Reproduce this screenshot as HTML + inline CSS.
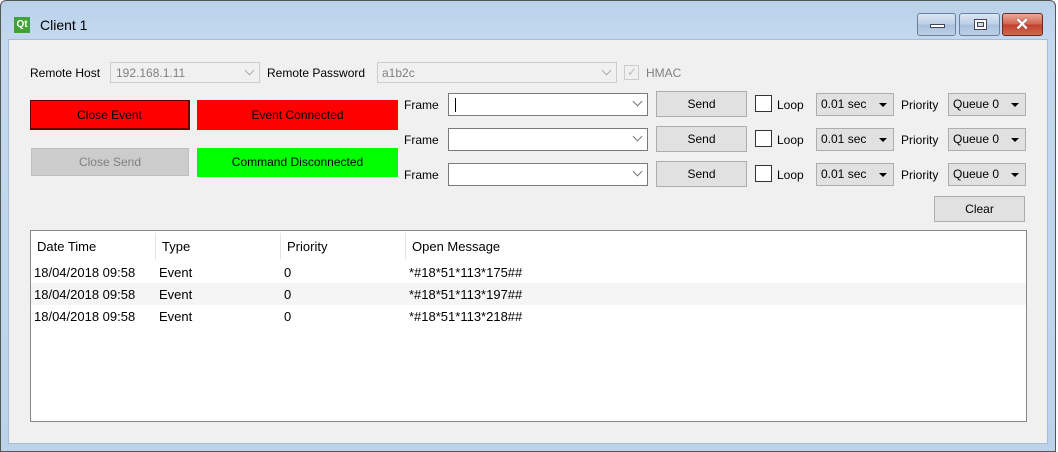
<!DOCTYPE html><html><head><style>
*{box-sizing:border-box;margin:0;padding:0}
body{width:1058px;height:452px;overflow:hidden;font-family:"Liberation Sans",sans-serif;font-size:12px;color:#000;background:#fff;position:relative}
.a{position:absolute}
.win{left:0;top:0;width:1056px;height:452px;background:linear-gradient(#b9d1ea,#c4d9ee 40px,#bcd3ea);border:1px solid #555;border-radius:6px 6px 0 0}
.client{left:8px;top:39px;width:1040px;height:405px;background:#f0f0f0;border:1px solid #a6bdd6}
.t{position:absolute;white-space:nowrap;line-height:14px}
.btn{position:absolute;border:1px solid #adadad;background:#e1e1e1;text-align:center;white-space:nowrap}
.cb{position:absolute;border:1px solid #7a7a7a;background:#fff}
.arr{position:absolute;right:6px;top:50%;width:0;height:0;border-left:4px solid transparent;border-right:4px solid transparent;border-top:4px solid #000;margin-top:-2px}
.chev{position:absolute;right:6px;top:4px;width:7px;height:7px;border-right:1px solid #777;border-bottom:1px solid #777;transform:rotate(45deg)}
.wb{position:absolute;top:13px;height:23px;border:1px solid #6b7f99;border-radius:3px;background:linear-gradient(#d9e6f4,#bccfe6 50%,#a9c0dc 51%,#bcd0e7)}
</style></head><body>
<div class="a win"></div>
<div class="a" style="left:14px;top:17px;width:16px;height:16px;background:#41a13a;color:#fff;font-size:10px;font-weight:bold;line-height:16px;text-align:center">Qt</div>
<div class="t" style="left:40px;top:17px;font-size:14px;line-height:16px">Client 1</div>
<div class="wb" style="left:917px;width:39px"><div class="a" style="left:12px;top:10px;width:15px;height:4px;background:#fff;border:1px solid #445"></div></div>
<div class="wb" style="left:959px;width:41px"><div class="a" style="left:14px;top:5px;width:13px;height:11px;background:#fff;border:1px solid #445"><div class="a" style="left:2px;top:2px;width:7px;height:5px;border:1px solid #445;background:#d0dcea"></div></div></div>
<div class="wb" style="left:1002px;width:41px;border-color:#6b2a22;background:linear-gradient(#e8a898,#d0634e 50%,#c0402a 51%,#d06a50)"><div class="t" style="left:12px;top:2px;color:#fff;font-size:17px;font-weight:bold;line-height:18px;text-shadow:0 0 1px #333">✕</div></div>
<div class="a client"></div>

<div class="t" style="left:30px;top:66px">Remote Host</div>
<div class="cb" style="left:110px;top:62px;width:150px;height:21px;border-color:#ccc;background:#f0f0f0"><div class="t" style="left:5px;top:3px;color:#808080">192.168.1.11</div><div class="chev" style="border-color:#aaa"></div></div>
<div class="t" style="left:267px;top:66px">Remote Password</div>
<div class="cb" style="left:377px;top:62px;width:240px;height:21px;border-color:#ccc;background:#f0f0f0"><div class="t" style="left:4px;top:3px;color:#808080">a1b2c</div><div class="chev" style="border-color:#aaa"></div></div>
<div class="cb" style="left:624px;top:65px;width:15px;height:15px;border-color:#ccc;background:#f0f0f0"><div class="t" style="left:2px;top:-1px;color:#bbb;font-size:12px">✓</div></div>
<div class="t" style="left:646px;top:66px;color:#808080">HMAC</div>

<div class="btn" style="left:30px;top:100px;width:160px;height:30px;background:#f00;border:1px solid #600;border-width:1px 2px 2px 1px;line-height:28px">Close Event</div>
<div class="btn" style="left:197px;top:100px;width:201px;height:30px;background:#f00;border:none;line-height:30px">Event Connected</div>
<div class="btn" style="left:31px;top:148px;width:158px;height:28px;background:#ccc;border-color:#bfbfbf;color:#808080;line-height:26px">Close Send</div>
<div class="btn" style="left:197px;top:148px;width:201px;height:29px;background:#0f0;border:none;line-height:29px">Command Disconnected</div>

<div class="t" style="left:404px;top:98px">Frame</div>
<div class="cb" style="left:448px;top:93px;width:200px;height:23px"><div class="a" style="left:6px;top:4px;width:1px;height:14px;background:#000"></div><div class="chev"></div></div>
<div class="btn" style="left:656px;top:91px;width:91px;height:26px;line-height:24px">Send</div>
<div class="cb" style="left:755px;top:95px;width:17px;height:17px;border-color:#333"></div>
<div class="t" style="left:777px;top:98px">Loop</div>
<div class="btn" style="left:816px;top:93px;width:78px;height:23px;text-align:left;padding-left:4px;line-height:21px">0.01 sec<div class="arr"></div></div>
<div class="t" style="left:901px;top:98px">Priority</div>
<div class="btn" style="left:948px;top:93px;width:78px;height:23px;text-align:left;padding-left:4px;line-height:21px">Queue 0<div class="arr"></div></div>

<div class="t" style="left:404px;top:133px">Frame</div>
<div class="cb" style="left:448px;top:128px;width:200px;height:23px"><div class="chev"></div></div>
<div class="btn" style="left:656px;top:126px;width:91px;height:26px;line-height:24px">Send</div>
<div class="cb" style="left:755px;top:130px;width:17px;height:17px;border-color:#333"></div>
<div class="t" style="left:777px;top:133px">Loop</div>
<div class="btn" style="left:816px;top:128px;width:78px;height:23px;text-align:left;padding-left:4px;line-height:21px">0.01 sec<div class="arr"></div></div>
<div class="t" style="left:901px;top:133px">Priority</div>
<div class="btn" style="left:948px;top:128px;width:78px;height:23px;text-align:left;padding-left:4px;line-height:21px">Queue 0<div class="arr"></div></div>

<div class="t" style="left:404px;top:168px">Frame</div>
<div class="cb" style="left:448px;top:163px;width:200px;height:23px"><div class="chev"></div></div>
<div class="btn" style="left:656px;top:161px;width:91px;height:26px;line-height:24px">Send</div>
<div class="cb" style="left:755px;top:165px;width:17px;height:17px;border-color:#333"></div>
<div class="t" style="left:777px;top:168px">Loop</div>
<div class="btn" style="left:816px;top:163px;width:78px;height:23px;text-align:left;padding-left:4px;line-height:21px">0.01 sec<div class="arr"></div></div>
<div class="t" style="left:901px;top:168px">Priority</div>
<div class="btn" style="left:948px;top:163px;width:78px;height:23px;text-align:left;padding-left:4px;line-height:21px">Queue 0<div class="arr"></div></div>

<div class="btn" style="left:934px;top:196px;width:91px;height:26px;line-height:24px">Clear</div>

<div class="a" style="left:30px;top:230px;width:997px;height:192px;background:#fff;border:1px solid #828790">
 <div class="a" style="left:124px;top:2px;width:1px;height:27px;background:#e5e5e5"></div>
 <div class="a" style="left:249px;top:2px;width:1px;height:27px;background:#e5e5e5"></div>
 <div class="a" style="left:374px;top:2px;width:1px;height:27px;background:#e5e5e5"></div>
 <div class="t" style="left:6px;top:9px;font-size:13px">Date Time</div>
 <div class="t" style="left:131px;top:9px;font-size:13px">Type</div>
 <div class="t" style="left:256px;top:9px;font-size:13px">Priority</div>
 <div class="t" style="left:381px;top:9px;font-size:13px">Open Message</div>
 <div class="a" style="left:0;top:52px;width:995px;height:22px;background:#f5f5f5"></div>
 <div class="t" style="left:3px;top:35px;font-size:13px">18/04/2018 09:58</div><div class="t" style="left:128px;top:35px;font-size:13px">Event</div><div class="t" style="left:253px;top:35px;font-size:13px">0</div><div class="t" style="left:378px;top:35px;font-size:13px">*#18*51*113*175##</div>
 <div class="t" style="left:3px;top:57px;font-size:13px">18/04/2018 09:58</div><div class="t" style="left:128px;top:57px;font-size:13px">Event</div><div class="t" style="left:253px;top:57px;font-size:13px">0</div><div class="t" style="left:378px;top:57px;font-size:13px">*#18*51*113*197##</div>
 <div class="t" style="left:3px;top:79px;font-size:13px">18/04/2018 09:58</div><div class="t" style="left:128px;top:79px;font-size:13px">Event</div><div class="t" style="left:253px;top:79px;font-size:13px">0</div><div class="t" style="left:378px;top:79px;font-size:13px">*#18*51*113*218##</div>
</div>
</body></html>
